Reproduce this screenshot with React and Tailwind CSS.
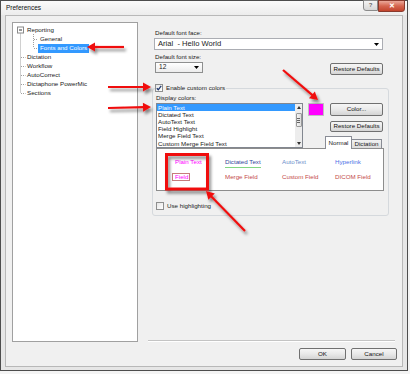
import React from 'react';

// tiny dropdown caret
function Caret({ className = '' }) {
  return (
    <svg width="5" height="3" viewBox="0 0 5 3" className={className}>
      <polygon points="0,0 5,0 2.5,3" fill="#000" />
    </svg>
  );
}

function Btn({ children, className = '' }) {
  return (
    <div
      className={`flex items-center justify-center rounded-[2px] border border-[#707070] bg-linear-to-b from-[#f6f6f6] via-[#e9e9e9] to-[#d4d4d4] text-[6.2px] leading-none text-[#111] ${className}`}
    >
      {children}
    </div>
  );
}

function Check({ checked }) {
  return (
    <div className="flex h-[8px] w-[8px] items-center justify-center border border-[#8e8f8f] bg-linear-to-br from-[#e6e6e6] to-white">
      {checked && (
        <svg width="6" height="6" viewBox="0 0 6 6">
          <path d="M0.8 3.2 L2.3 4.8 L5.2 0.9" stroke="#20386e" strokeWidth="1.3" fill="none" />
        </svg>
      )}
    </div>
  );
}

// red annotation arrow, head computed from direction
function Arrow({ x1, y1, x2, y2 }) {
  const dx = x2 - x1;
  const dy = y2 - y1;
  const len = Math.hypot(dx, dy);
  const ux = dx / len;
  const uy = dy / len;
  const hl = 8;
  const hw = 4.5;
  const bx = x2 - ux * hl;
  const by = y2 - uy * hl;
  const pts = `${x2},${y2} ${bx - uy * hw},${by + ux * hw} ${bx + uy * hw},${by - ux * hw}`;
  return (
    <g>
      <line x1={x1} y1={y1} x2={bx + ux} y2={by + uy} stroke="#f01010" strokeWidth="2.2" />
      <polygon points={pts} fill="#f01010" />
    </g>
  );
}

const treeRoots = ['Dictation', 'Workflow', 'AutoCorrect', 'Dictaphone PowerMic', 'Sections'];
const listItems = ['Dictated Text', 'AutoText Text', 'Field Highlight', 'Merge Field Text', 'Custom Merge Field Text'];

function Tree() {
  return (
    <div className="relative ml-[6px] mt-[6px] h-[320px] w-[126px] border border-[#a0a0a0] bg-white pt-[2.5px]">
      <svg className="absolute left-0 top-0" width="124" height="80">
        <g stroke="#a0a0a0" strokeWidth="1" strokeDasharray="1 1" fill="none">
          <line x1="7.5" y1="10.5" x2="7.5" y2="70" />
          {[34, 43, 52, 61, 70].map((y) => (
            <line key={y} x1="8" y1={y + 0.5} x2="12.5" y2={y + 0.5} />
          ))}
          <line x1="20.5" y1="11" x2="20.5" y2="25" />
          <line x1="21" y1="16.5" x2="25" y2="16.5" />
          <line x1="21" y1="25.5" x2="25" y2="25.5" />
        </g>
        <rect x="4.5" y="4" width="6" height="6" fill="#fff" stroke="#8a8a8a" strokeWidth="1" />
        <line x1="6" y1="7" x2="9" y2="7" stroke="#333" strokeWidth="1" />
      </svg>
      <div className="relative flex h-[9px] items-center pl-[14px]">Reporting</div>
      <div className="relative flex h-[9px] items-center pl-[25px]">
        <span className="px-[2px]">General</span>
      </div>
      <div className="relative flex h-[9px] items-center pl-[25px]">
        <span className="flex h-[9px] items-center bg-[#3399ff] px-[2px] text-white">Fonts and Colors</span>
      </div>
      {treeRoots.map((t) => (
        <div key={t} className="relative flex h-[9px] items-center pl-[14px]">
          {t}
        </div>
      ))}
    </div>
  );
}

function ListBox() {
  return (
    <div className="flex h-[45px] w-[147px] border border-[#828790] bg-white">
      <div className="flex-1 overflow-hidden">
        <div className="flex h-[7.15px] items-center bg-[#3399ff] pl-[1px] text-white">Plain Text</div>
        {listItems.map((t) => (
          <div key={t} className="flex h-[7.15px] items-center pl-[1px] whitespace-nowrap">
            {t}
          </div>
        ))}
      </div>
      <div className="flex w-[7px] flex-col bg-[#ededed]">
        <div className="flex h-[7px] items-center justify-center">
          <svg width="4" height="3" viewBox="0 0 4 3">
            <polygon points="0,3 4,3 2,0" fill="#333" />
          </svg>
        </div>
        <div className="mx-[0.5px] mt-[2px] flex h-[14px] flex-col items-center justify-center gap-[1px] rounded-[1px] border border-[#9a9a9a] bg-linear-to-r from-[#f4f4f4] to-[#dcdcdc]">
          <div className="h-px w-[3px] bg-[#666]" />
          <div className="h-px w-[3px] bg-[#666]" />
          <div className="h-px w-[3px] bg-[#666]" />
        </div>
        <div className="flex-1" />
        <div className="flex h-[7px] items-center justify-center">
          <svg width="4" height="3" viewBox="0 0 4 3">
            <polygon points="0,0 4,0 2,3" fill="#333" />
          </svg>
        </div>
      </div>
    </div>
  );
}

function Preview() {
  return (
    <div className="h-[43px] w-[228px] border border-[#8d8d8d] bg-white pl-[18px] pt-[9px]">
      <div className="flex h-[8px] items-center">
        <div className="w-[50px] text-[#ff00ff]">Plain Text</div>
        <div className="w-[57px]">
          <span className="inline-block border-b border-[#82d682] pb-[1px] leading-[8px] text-[#33449a]">Dictated Text</span>
        </div>
        <div className="w-[53px] text-[#6b8fcb]">AutoText</div>
        <div className="text-[#4d70e6]">Hyperlink</div>
      </div>
      <div className="mt-[7px] flex h-[8px] items-center">
        <div className="w-[50px]">
          <span className="-ml-[3px] flex h-[8px] w-[18px] items-center border border-[#c67c7c] pl-[2px] text-[#ff00ff]">Field</span>
        </div>
        <div className="w-[57px] text-[#c44a4a]">Merge Field</div>
        <div className="w-[53px] text-[#c44a4a]">Custom Field</div>
        <div className="text-[#c44a4a]">DICOM Field</div>
      </div>
    </div>
  );
}

export default function App() {
  return (
    <div className="relative h-[374px] w-[410px] overflow-hidden bg-[#f4f4f4] font-['Liberation_Sans',Arial,sans-serif] text-[6.2px] text-[#1a1a1a]">
      <div className="flex h-[371px] w-[408px] flex-col border border-[#4d4d4d] bg-[#e6e6e6]">
        {/* title bar */}
        <div className="flex h-[14px] items-start bg-linear-to-b from-[#fbfbfb] to-[#ececec]">
          <div className="pl-[5px] pt-[4px] text-[6.5px] leading-none text-[#111]">Preferences</div>
          <div className="flex-1" />
          <div className="-mt-px flex h-[11px] w-[15px] items-center justify-center rounded-bl-[3px] border border-[#8b8b8b] bg-linear-to-b from-[#f5f5f5] to-[#d6d6d6] text-[6px] font-bold text-[#666]">
            ?
          </div>
          <div className="-mt-px mr-[2px] flex h-[12px] w-[27px] items-center justify-center rounded-br-[3px] border border-[#8a3a2d] bg-linear-to-b from-[#eaa89a] via-[#d5654f] to-[#c2432c] text-[7px] font-bold text-white">
            ✕
          </div>
        </div>
        {/* content */}
        <div className="mx-[4px] flex h-[352px] border border-[#b8b8b8] bg-[#f0f0f0]">
          <Tree />
          <div className="ml-[10px] flex h-full w-[249px] flex-col">
            <div className="mt-[13px] h-[8px] pl-[7px] leading-[8px]">Default font face:</div>
            <div className="ml-[6px] mt-[1px] flex h-[12px] w-[229px] items-center border border-[#abadb3] bg-white pl-[3px]">
              <span className="flex-1 text-[7.6px] leading-none">Arial&nbsp; - Hello World</span>
              <Caret className="mr-[3px]" />
            </div>
            <div className="mt-[3px] h-[8px] pl-[7px] leading-[8px]">Default font size:</div>
            <div className="mt-[1px] flex h-[13px] items-start">
              <div className="ml-[7px] flex h-[11px] w-[48px] items-center border border-[#8e8f8f] bg-linear-to-b from-white to-[#ececec] pl-[3px]">
                <span className="flex-1 text-[6.6px] leading-none">12</span>
                <Caret className="mr-[3px]" />
              </div>
              <Btn className="ml-[127px] mt-[1px] h-[12px] w-[53px]">Restore Defaults</Btn>
            </div>

            <fieldset className="ml-[4px] mt-[9px] w-[237px] rounded-[3px] border border-[#d5d9dd] px-[3px] pb-[5px]">
              <legend className="-ml-px flex h-[8px] items-center pr-[1px]">
                <Check checked />
                <span className="ml-[3px]">Enable custom colors</span>
              </legend>
              <div className="mt-[2px] h-[8px] leading-[8px]">Display colors:</div>
              <div className="mt-[1px] flex">
                <ListBox />
                <div className="flex w-[81px] flex-col">
                  <div className="flex">
                    <div className="ml-[5px] h-[13px] w-[16px] border border-[#c0c0c0] bg-[#ff00ff]" />
                    <Btn className="ml-[6px] h-[13px] w-[53px]">Color...</Btn>
                  </div>
                  <Btn className="ml-[27px] mt-[5px] h-[11px] w-[53px]">Restore Defaults</Btn>
                  <div className="mt-[4px] flex h-[12px] items-end justify-end pr-[2px]">
                    <div className="relative z-10 -mb-px flex h-[13px] w-[27px] items-center justify-center border border-b-0 border-[#898c95] bg-white">
                      Normal
                    </div>
                    <div className="flex h-[9px] w-[30px] items-center justify-center border border-l-0 border-b-0 border-[#898c95] bg-linear-to-b from-[#f2f2f2] to-[#dcdcdc]">
                      Dictation
                    </div>
                  </div>
                </div>
              </div>
              <Preview />
              <div className="mt-[11px] flex h-[8px] items-center">
                <Check />
                <span className="ml-[3px]">Use highlighting</span>
              </div>
            </fieldset>

            <div className="flex-1" />
            <div className="mr-[2px] h-[2px] border-t border-b border-t-[#c4c4c4] border-b-white" />
            <div className="mb-[6px] mt-[6px] flex justify-end gap-[5px]">
              <Btn className="h-[12px] w-[47px] border-[#3c7fb1] from-[#f2f8fc] via-[#e6f0f7] to-[#d2e3ef]">OK</Btn>
              <Btn className="h-[12px] w-[46px]">Cancel</Btn>
            </div>
          </div>
        </div>
      </div>

      {/* red annotations */}
      <svg className="pointer-events-none absolute left-0 top-0" width="410" height="374">
        <defs>
          <filter id="sh" x="-20%" y="-20%" width="160%" height="160%">
            <feDropShadow dx="2" dy="3" stdDeviation="1.6" floodColor="#000" floodOpacity="0.45" />
          </filter>
        </defs>
        <g filter="url(#sh)">
          <Arrow x1={124} y1={47} x2={87} y2={47} />
          <Arrow x1={108} y1={87} x2={151} y2={87} />
          <Arrow x1={108} y1={108} x2={151} y2={107} />
          <Arrow x1={283} y1={70} x2={318} y2={100} />
          <Arrow x1={245} y1={231} x2={206} y2={191} />
          <rect x="166.5" y="154.5" width="41" height="34.5" fill="none" stroke="#f01010" strokeWidth="3" />
        </g>
      </svg>
    </div>
  );
}
